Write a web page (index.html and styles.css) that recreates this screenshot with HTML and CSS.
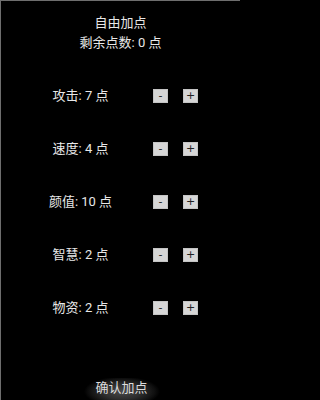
FILE: index.html
```html
<!DOCTYPE html>
<html lang="zh">
<head>
<meta charset="utf-8">
<link rel="stylesheet" href="styles.css">
</head>
<body>
<div class="screen">
  <header class="header">
    <div class="title">自由加点</div>
    <div class="remain">剩余点数: 0 点</div>
  </header>
  <div class="stats">
    <div class="row"><span class="label">攻击: 7 点</span><button class="btn">-</button><button class="btn">+</button></div>
    <div class="row"><span class="label">速度: 4 点</span><button class="btn">-</button><button class="btn">+</button></div>
    <div class="row"><span class="label">颜值: 10 点</span><button class="btn">-</button><button class="btn">+</button></div>
    <div class="row"><span class="label">智慧: 2 点</span><button class="btn">-</button><button class="btn">+</button></div>
    <div class="row"><span class="label">物资: 2 点</span><button class="btn">-</button><button class="btn">+</button></div>
  </div>
  <div class="footer"><div class="confirm">确认加点</div></div>
</div>
</body>
</html>
```
FILE: styles.css
```css
html, body {
  margin: 0;
  padding: 0;
  background: #000;
}
body {
  width: 240px;
  height: 400px;
  overflow: hidden;
  font-family: Roboto, "Noto Sans CJK SC", sans-serif;
  color: #e8e8e8;
}
.screen {
  box-sizing: border-box;
  width: 240px;
  height: 400px;
  border-top: 1px solid #6e6e6e;
  border-left: 1px solid #6e6e6e;
  display: flex;
  flex-direction: column;
}
.header {
  padding-top: 12px;
  display: flex;
  flex-direction: column;
  align-items: center;
}
.title, .remain {
  font-size: 13px;
  line-height: 20px;
}
.stats {
  margin-top: 36px;
  display: flex;
  flex-direction: column;
  gap: 39px;
}
.row {
  height: 14px;
  display: flex;
  align-items: center;
  padding-left: 7px;
}
.label {
  width: 145px;
  text-align: center;
  font-size: 13px;
  line-height: 14px;
}
.btn {
  box-sizing: border-box;
  width: 15px;
  height: 14px;
  padding: 0;
  margin: 0 15px 0 0;
  border: 1px solid #c4c4c4;
  background: #d6d6d6;
  color: #222;
  font-family: "DejaVu Sans", sans-serif;
  font-size: 11px;
  line-height: 12px;
  text-align: center;
}
.footer {
  margin-top: 63px;
  display: flex;
  justify-content: center;
}
.confirm {
  width: 76px;
  height: 30px;
  margin-left: 2px;
  font-size: 13px;
  line-height: 20px;
  text-align: center;
  color: #dcdcdc;
  background: radial-gradient(ellipse 50% 50% at 50% 45%, #4a4a4a 0%, #2e2e2e 50%, #101010 85%, #000 100%);
}
```
